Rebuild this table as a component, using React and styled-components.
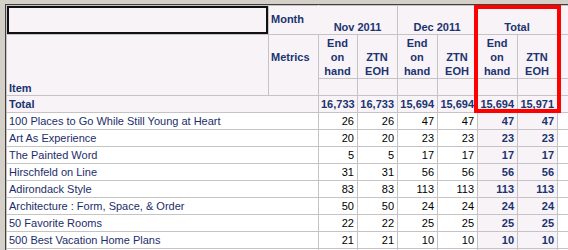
import { Fragment } from "react"
import styled, { createGlobalStyle } from "styled-components"

const GlobalStyle = createGlobalStyle`
  html, body {
    margin: 0;
    padding: 0;
    background: #d4d0c8;
    overflow: hidden;
  }
  body {
    font-family: "Liberation Sans", Arial, sans-serif;
  }
`

const Page = styled.div`
  padding: 4px 0 0 5px;
  width: 568px;
  height: 250px;
  box-sizing: border-box;
  overflow: hidden;
`

const Panel = styled.div`
  position: relative;
  border-top: 1px solid #404040;
  border-left: 1px solid #404040;
  background: #ffffff;
  height: 245px;
  overflow: hidden;
`

const Grid = styled.table`
  border-collapse: collapse;
  table-layout: fixed;
  width: 592px;
  font-size: 11px;
`

const Cell = styled.td`
  border: 1px solid #c6c3c6;
  padding: 0 3px 0 2px;
  height: ${p => p.$h || 16}px;
  line-height: 14px;
  white-space: nowrap;
  overflow: hidden;
  box-sizing: border-box;
`

const Head = styled(Cell)`
  background: #f7f3f7;
  color: #1c3370;
  font-weight: bold;
  text-align: ${p => p.$align || "center"};
  vertical-align: ${p => p.$valign || "bottom"};
`

const MonthHead = styled(Head)`
  text-align: left;
  vertical-align: bottom;
  border-right-color: #f7f3f7;
`

const MonthLabel = styled.div`
  padding-bottom: 8px;
`

const Corner = styled(Head)`
  box-shadow: inset 0 0 0 2px #111111;
`

const MetricsLabel = styled.div`
  margin-bottom: 16px;
`

const ItemName = styled(Cell)`
  color: #1c2d6a;
  padding-left: 2px;
`

const Num = styled(Cell)`
  text-align: right;
  color: ${p => (p.$total ? "#1c3370" : "#000000")};
  font-weight: ${p => (p.$total ? "bold" : "normal")};
  background: ${p => (p.$total ? "#f7f3f7" : "#ffffff")};
`

const TotalNum = styled(Head)`
  text-align: right;
  vertical-align: middle;
`

const Filler = styled(Cell)`
  border-right: none;
  background: ${p => (p.$head ? "#f7f3f7" : "#ffffff")};
`

const Highlight = styled.div`
  position: absolute;
  left: 468px;
  top: 0;
  width: 87px;
  height: 108px;
  border: 4px solid #ff0000;
  box-sizing: border-box;
  pointer-events: none;
`

const totals = ["16,733", "16,733", "15,694", "15,694", "15,694", "15,971"]

const items = [
  ["100 Places to Go While Still Young at Heart", 26, 26, 47, 47, 47, 47],
  ["Art As Experience", 20, 20, 23, 23, 23, 23],
  ["The Painted Word", 5, 5, 17, 17, 17, 17],
  ["Hirschfeld on Line", 31, 31, 56, 56, 56, 56],
  ["Adirondack Style", 83, 83, 113, 113, 113, 113],
  ["Architecture : Form, Space, & Order", 50, 50, 24, 24, 24, 24],
  ["50 Favorite Rooms", 22, 22, 25, 25, 25, 25],
  ["500 Best Vacation Home Plans", 21, 21, 10, 10, 10, 10],
  ["", "", "", "", "", "", ""],
]

const months = ["Nov 2011", "Dec 2011", "Total"]

export default function App() {
  return (
    <Page>
      <GlobalStyle />
      <Panel>
        <Grid>
          <colgroup>
            <col style={{ width: 262 }} />
            <col style={{ width: 50 }} />
            <col style={{ width: 39 }} />
            <col style={{ width: 40 }} />
            <col style={{ width: 40 }} />
            <col style={{ width: 40 }} />
            <col style={{ width: 40 }} />
            <col style={{ width: 40 }} />
            <col style={{ width: 41 }} />
          </colgroup>
          <tbody>
            <tr>
              <Corner $h={29} />
              <MonthHead $h={29}>
                <MonthLabel>Month</MonthLabel>
              </MonthHead>
              {months.map(m => (
                <Head key={m} $h={29} colSpan={2}>{m}</Head>
              ))}
              <Filler $head />
            </tr>
            <tr>
              <Head $h={44} rowSpan={2} $align="left">Item</Head>
              <Head $h={44} rowSpan={2} $align="left" $valign="middle">
                <MetricsLabel>Metrics</MetricsLabel>
              </Head>
              {months.map(m => (
                <Fragment key={m}>
                  <Head $h={44}>End<br />on<br />hand</Head>
                  <Head $h={44}>ZTN<br />EOH</Head>
                </Fragment>
              ))}
              <Filler $head />
            </tr>
            <tr>
              {totals.map((_, i) => (
                <Head key={i} $h={17} />
              ))}
              <Filler $head />
            </tr>
            <tr>
              <Head $h={17} colSpan={2} $align="left" $valign="middle">Total</Head>
              {totals.map((t, i) => (
                <TotalNum key={i} $h={17}>{t}</TotalNum>
              ))}
              <Filler $head />
            </tr>
            {items.map(([name, ...vals], r) => (
              <tr key={r}>
                <ItemName colSpan={2} $h={17}>{name}</ItemName>
                {vals.map((v, i) => (
                  <Num key={i} $h={17} $total={i >= 4}>{v}</Num>
                ))}
                <Filler />
              </tr>
            ))}
          </tbody>
        </Grid>
        <Highlight />
      </Panel>
    </Page>
  )
}
